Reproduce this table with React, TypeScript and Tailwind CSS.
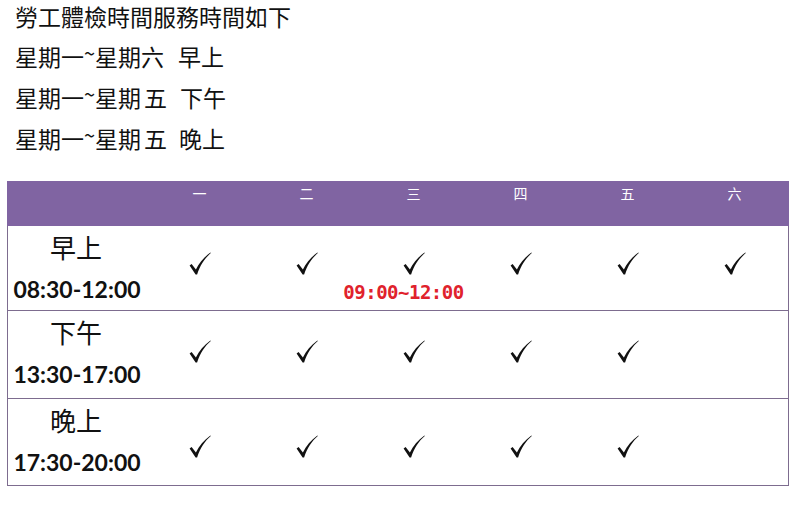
import React from "react";

const cjk = "font-['Noto_Sans_CJK_TC','Noto_Sans_CJK_SC',sans-serif]";

function Check({ cls = "" }: { cls?: string }) {
  return (
    <svg width="22" height="23" viewBox="0 0 22 23" className={cls}>
      <path
        d="M0.6 13.6 L2.6 12.1 L6.9 17.6 C10 11 15 5 21.4 0.5 L21.8 1.1 C16 6 11.2 13 8.1 22.4 L6.6 22.4 Z"
        fill="#111"
      />
    </svg>
  );
}

type Row = {
  label: string;
  time: string;
  h: string;
  pt: string;
  border: string;
  checks: boolean[];
};

const rows: Row[] = [
  {
    label: "早上",
    time: "08:30-12:00",
    h: "h-[84px]",
    pt: "pt-[26px]",
    border: "",
    checks: [true, true, true, true, true, true],
  },
  {
    label: "下午",
    time: "13:30-17:00",
    h: "h-[88px]",
    pt: "pt-[29px]",
    border: "border-t border-[#7d6c8f]",
    checks: [true, true, true, true, true, false],
  },
  {
    label: "晚上",
    time: "17:30-20:00",
    h: "h-[87px]",
    pt: "pt-[36px]",
    border: "border-t border-[#7d6c8f]",
    checks: [true, true, true, true, true, false],
  },
];

const days = ["一", "二", "三", "四", "五", "六"];

export default function App() {
  return (
    <div className="w-[805px] h-[508px] bg-white text-[#111] overflow-hidden">
      <div className={`pl-[15px] ${cjk} text-[23px]`}>
        <div className="h-[32px] flex items-center whitespace-nowrap">勞工體檢時間服務時間如下</div>
        <div className="mt-[4px]">
          <div className="h-[41px] flex items-center whitespace-nowrap">
            <span>星期一</span>
            <span className="w-[11px] inline-block -translate-y-[4px] text-[20px]">~</span>
            <span>星期六</span>
            <span className="ml-[14px]">早上</span>
          </div>
          <div className="h-[41px] flex items-center whitespace-nowrap">
            <span>星期一</span>
            <span className="w-[11px] inline-block -translate-y-[4px] text-[20px]">~</span>
            <span>星期</span>
            <span className="ml-[3px]">五</span>
            <span className="ml-[13px]">下午</span>
          </div>
          <div className="h-[41px] flex items-center whitespace-nowrap">
            <span>星期一</span>
            <span className="w-[11px] inline-block -translate-y-[4px] text-[20px]">~</span>
            <span>星期</span>
            <span className="ml-[3px]">五</span>
            <span className="ml-[12px]">晚上</span>
          </div>
        </div>
      </div>

      <div className="ml-[7px] mt-[22px] w-[782px]">
        <div className="h-[45px] bg-[#8064a2] flex pl-[139px]">
          {days.map((d) => (
            <div
              key={d}
              className={`w-[107px] text-center text-white text-[14px] leading-[20px] pt-[2px] ${cjk}`}
            >
              {d}
            </div>
          ))}
        </div>
        <div className="border-x border-b border-[#7d6c8f]">
          {rows.map((r) => (
            <div key={r.label} className={`flex ${r.h} ${r.border}`}>
              <div className="w-[138px] flex flex-col items-center pt-[5px] gap-[13px]">
                <div className={`${cjk} text-[26px] leading-[31px] h-[31px] -translate-x-[1px]`}>{r.label}</div>
                <div className="font-['Lato',sans-serif] font-bold text-[23px] leading-[28px]">
                  {r.time}
                </div>
              </div>
              {r.checks.map((c, i) => (
                <div key={i} className={`w-[107px] flex flex-col items-center ${r.pt}`}>
                  {c ? <Check /> : null}
                  {r.label === "早上" && i === 2 ? (
                    <div className="whitespace-nowrap -translate-x-[10px] mt-[6px] font-['DejaVu_Sans_Mono',monospace] font-bold text-[19px] tracking-[-0.5px] leading-[22px] text-[#e0222c]">
                      09:00~12:00
                    </div>
                  ) : null}
                </div>
              ))}
            </div>
          ))}
        </div>
      </div>
    </div>
  );
}
